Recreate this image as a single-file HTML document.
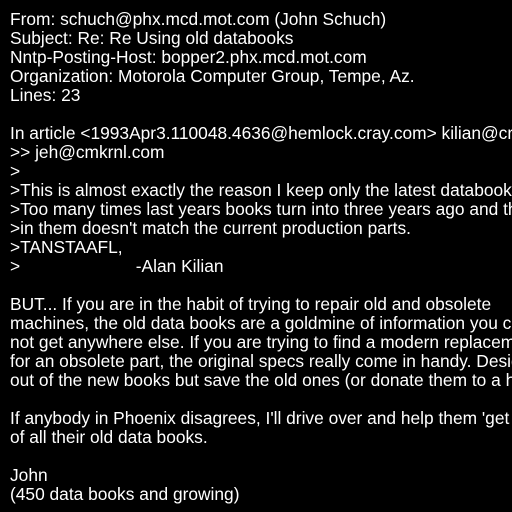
<!DOCTYPE html>
<html><head><style>
html,body{margin:0;padding:0;background:#000;width:512px;height:512px;overflow:hidden}
pre{margin:0;position:absolute;left:10px;top:10px;color:#fff;font-family:"Liberation Sans",Arial,sans-serif;font-size:17.35px;line-height:19px;white-space:pre}
</style></head><body>
<pre>From: schuch@phx.mcd.mot.com (John Schuch)
Subject: Re: Re Using old databooks
Nntp-Posting-Host: bopper2.phx.mcd.mot.com
Organization: Motorola Computer Group, Tempe, Az.
Lines: 23

In article &lt;1993Apr3.110048.4636@hemlock.cray.com&gt; kilian@cray.com
&gt;&gt; jeh@cmkrnl.com
&gt;
&gt;This is almost exactly the reason I keep only the latest databook and
&gt;Too many times last years books turn into three years ago and the
&gt;in them doesn't match the current production parts.
&gt;TANSTAAFL,
&gt;                        -Alan Kilian

BUT... If you are in the habit of trying to repair old and obsolete
machines, the old data books are a goldmine of information you can
not get anywhere else. If you are trying to find a modern replacement
for an obsolete part, the original specs really come in handy. Design
out of the new books but save the old ones (or donate them to a ham

If anybody in Phoenix disagrees, I'll drive over and help them 'get rid
of all their old data books.

John
(450 data books and growing)</pre>
</body></html>
